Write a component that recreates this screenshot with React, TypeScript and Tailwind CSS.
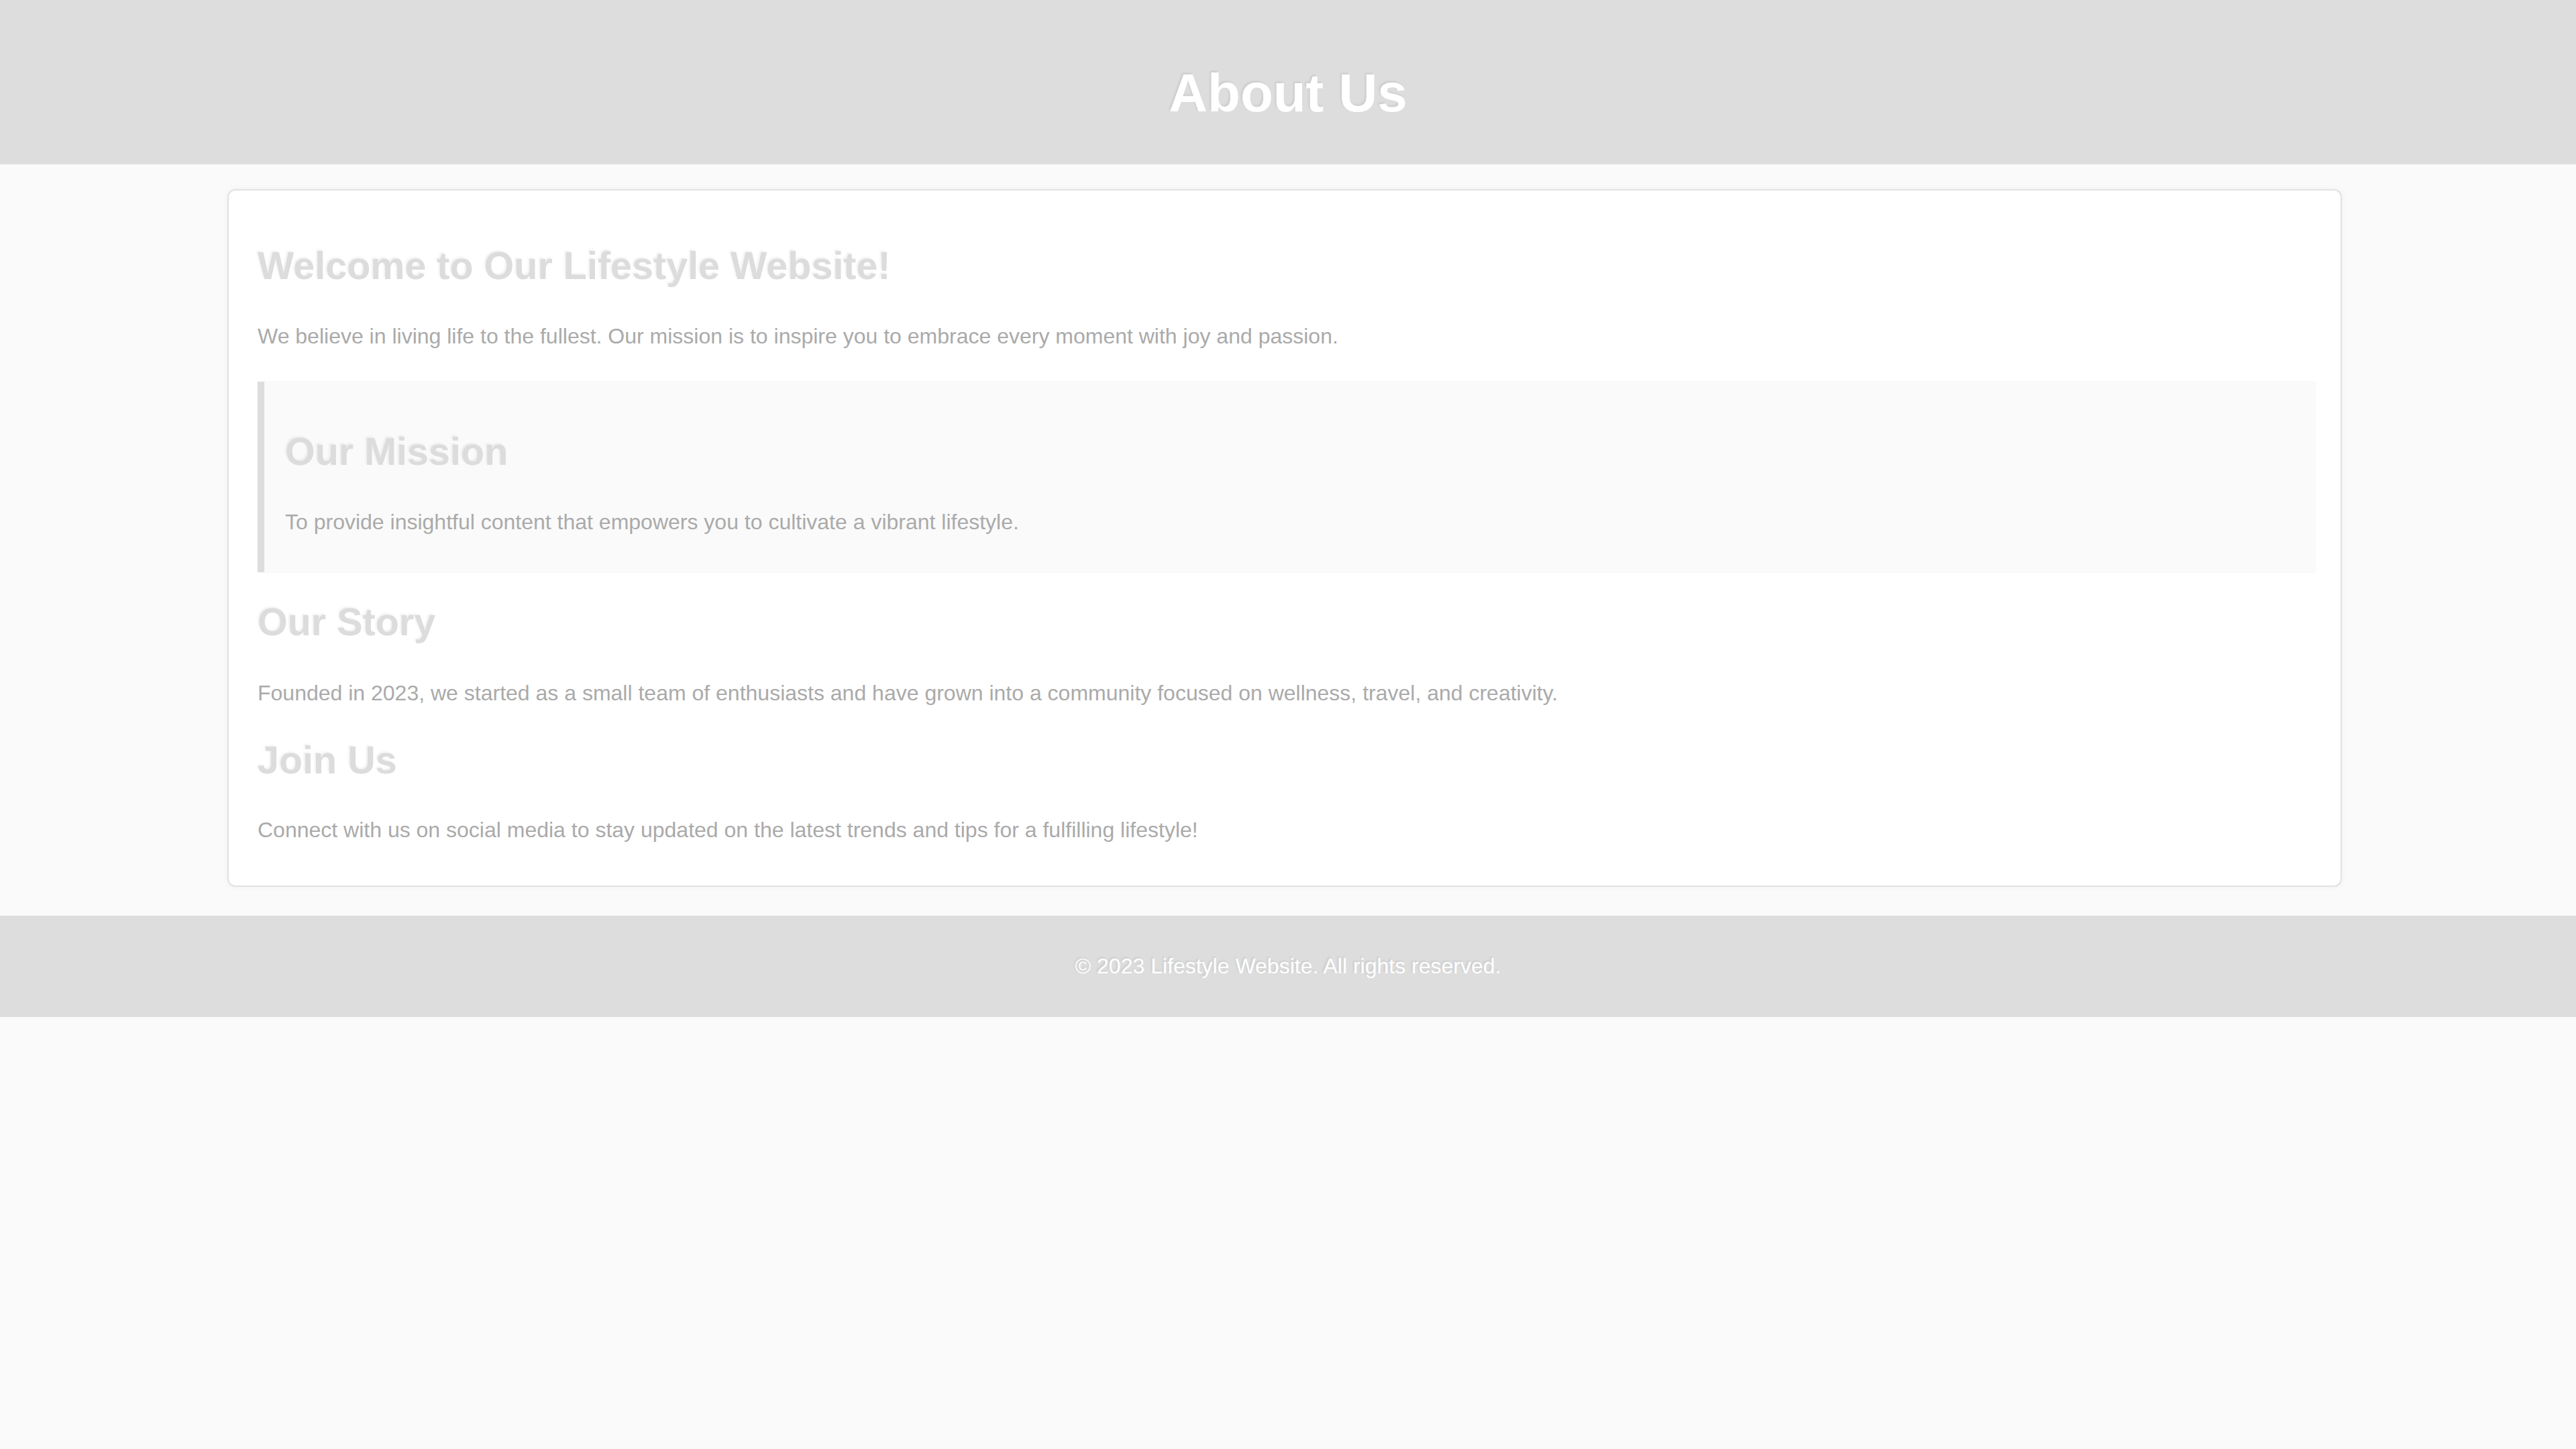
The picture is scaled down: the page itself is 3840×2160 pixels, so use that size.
import React from 'react';

const SANS = "font-['Liberation_Sans',Arial,sans-serif]";

const HEADING =
  'text-[57.5px] leading-[70px] font-bold text-[#dcdcdc] [text-shadow:-2px_-2px_3px_rgba(0,0,0,0.06)]';
const BODY = 'text-[32px] leading-[48px] text-[#aaaaaa]';

export default function App() {
  return (
    <div className={`min-h-screen w-full bg-[#fafafa] ${SANS}`}>
      {/* Page header */}
      <header className="h-[245px] bg-[#dddddd] pt-[93px] text-center">
        <h1 className="text-[80px] leading-[92px] font-bold text-white [text-shadow:-2px_-2px_3px_rgba(0,0,0,0.08)]">
          About Us
        </h1>
      </header>

      {/* Content card */}
      <main className="ml-[339px] mt-[37px] w-[3152px] rounded-[12px] border-2 border-[#e2e2e2] bg-white pl-[43px] pr-[38px] pt-[77px] pb-[59px] shadow-[0_0_8px_rgba(0,0,0,0.05)]">
        <h2 className={`${HEADING} mb-[46px]`}>Welcome to Our Lifestyle Website!</h2>
        <p className={BODY}>
          We believe in living life to the fullest. Our mission is to inspire you to embrace every
          moment with joy and passion.
        </p>

        <section className="mt-[44px] border-l-[10px] border-[#dddddd] bg-[#fafafa] pl-[31px] pt-[69px] pb-[51px] shadow-[0_0_3px_rgba(0,0,0,0.06)]">
          <h2 className={`${HEADING} mb-[46px]`}>Our Mission</h2>
          <p className={BODY}>
            To provide insightful content that empowers you to cultivate a vibrant lifestyle.
          </p>
        </section>

        <h2 className={`${HEADING} mt-[39px] mb-[47px]`}>Our Story</h2>
        <p className={BODY}>
          Founded in 2023, we started as a small team of enthusiasts and have grown into a community
          focused on wellness, travel, and creativity.
        </p>

        <h2 className={`${HEADING} mt-[41px] mb-[45px]`}>Join Us</h2>
        <p className={BODY}>
          Connect with us on social media to stay updated on the latest trends and tips for a
          fulfilling lifestyle!
        </p>
      </main>

      {/* Footer */}
      <footer className="mt-[43px] flex h-[151px] items-center justify-center bg-[#dddddd]">
        <p className="text-[32px] leading-[37px] text-white [text-shadow:-2px_-2px_3px_rgba(0,0,0,0.08)]">
          © 2023 Lifestyle Website. All rights reserved.
        </p>
      </footer>
    </div>
  );
}
